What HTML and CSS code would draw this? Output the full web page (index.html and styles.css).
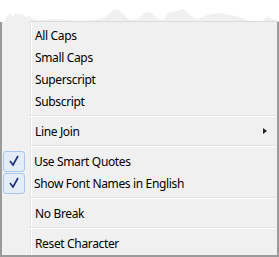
FILE: index.html
```html
<!DOCTYPE html>
<html>
<head>
<meta charset="utf-8">
<title>Character menu</title>
<link rel="stylesheet" href="styles.css">
</head>
<body>
<svg class="tear" width="279" height="22" viewBox="0 0 279 22">
<polygon fill="#f0f0f0" points="0,22 5,21 7,16 10,14 13,16 16,13 19,15 22,14 26,17 30,16 33,19 40,20 55,19 70,20 80,21 90,20 100,19 105,17 110,13 114,10 117,9 120,11 125,16 130,20 138,19 142,15 147,12 152,13 158,19 163,20 168,13 172,12 178,11 183,9 188,13 195,19 200,18 210,14 220,13 230,15 240,17 250,21 257,22 262,21 266,18 268,16 271,19 276,20 279,22"/>
<line x1="30" y1="21.5" x2="279" y2="21.5" stroke="#dcdcdc" stroke-width="1"/>
</svg>
<div class="menu">
  <div class="item"><span class="label">All Caps</span></div>
  <div class="item"><span class="label">Small Caps</span></div>
  <div class="item"><span class="label">Superscript</span></div>
  <div class="item"><span class="label">Subscript</span></div>
  <div class="sep"></div>
  <div class="item"><span class="label">Line Join</span><span class="arrow"></span></div>
  <div class="sep"></div>
  <div class="item checked">
    <span class="check"><svg width="20" height="18" viewBox="0 0 20 18"><path d="M6 9 L9 13 L14 4" fill="none" stroke="#1c2a7a" stroke-width="1.6"/></svg></span>
    <span class="label">Use Smart Quotes</span>
  </div>
  <div class="item checked">
    <span class="check"><svg width="20" height="18" viewBox="0 0 20 18"><path d="M6 9 L9 13 L14 4" fill="none" stroke="#1c2a7a" stroke-width="1.6"/></svg></span>
    <span class="label">Show Font Names in English</span>
  </div>
  <div class="sep"></div>
  <div class="item"><span class="label">No Break</span></div>
  <div class="sep"></div>
  <div class="item"><span class="label">Reset Character</span></div>
</div>
</body>
</html>
```
FILE: styles.css
```css
body { margin: 0; padding: 0; background: white; width: 279px; height: 257px; overflow: hidden; font-family: "Noto Sans", "Open Sans", sans-serif; font-size: 12px; letter-spacing: -0.35px; color: #000; }
.tear { display: block; }
.menu { background: #f0f0f0 linear-gradient(to right, transparent 28px, #e2e3e3 28px, #e2e3e3 29px, #fff 29px, #fff 30px, transparent 30px); border-left: 2px solid #9a9a9a; border-right: 2px solid #9a9a9a; border-bottom: 2px solid #9a9a9a; padding: 2px 0 1px 0; }
.item { display: flex; align-items: center; height: 22px; position: relative; }
.label { padding-left: 33px; white-space: nowrap; }
.checked .label { padding-left: 9px; }
.check { display: flex; align-items: center; justify-content: center; width: 20px; height: 19px; margin-left: 1px; border: 1px solid #a9c6ec; border-radius: 3px; background: #e3ecf7; }
.arrow { margin-left: auto; margin-right: 10px; width: 0; height: 0; border-top: 3.5px solid transparent; border-bottom: 3.5px solid transparent; border-left: 4px solid #222; }
.sep { height: 8px; margin-left: 28px; margin-right: 2px; background: linear-gradient(to bottom, transparent 3px, #e0e0e0 3px, #e0e0e0 4px, #fff 4px, #fff 5px, transparent 5px); }
```
